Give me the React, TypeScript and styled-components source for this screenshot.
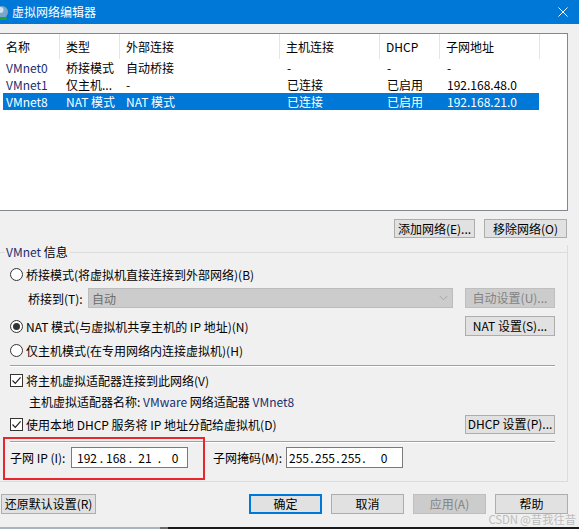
import React from 'react';
import styled, { createGlobalStyle, css } from 'styled-components';

const GlobalStyle = createGlobalStyle`
  body {
    margin: 0;
    font-family: "Noto Sans CJK SC", "Noto Sans", sans-serif;
    font-size: 12px;
    color: #000;
  }
  * { box-sizing: border-box; }
`;

const Window = styled.div`
  position: relative;
  width: 579px;
  height: 529px;
  background: #f0f0f0;
  overflow: hidden;
  display: flex;
  flex-direction: column;
`;

const TitleBar = styled.div`
  height: 24px;
  flex: none;
  background: #0078d7;
  color: #fff;
  display: flex;
  align-items: center;
`;

const Title = styled.span`
  margin-left: 3px;
  line-height: 24px;
  font-size: 12px;
`;

const CloseBox = styled.div`
  margin-left: auto;
  width: 32px;
  height: 24px;
  display: flex;
  align-items: center;
  justify-content: center;
`;

const Body = styled.div`
  flex: 1;
  display: flex;
  flex-direction: column;
  padding: 9px 11px 0 0;
`;

const ListBox = styled.div`
  height: 178px;
  background: #fff;
  border: 1px solid #828790;
  border-left: none;
`;

const HeaderRow = styled.div`
  display: flex;
  height: 25px;
`;

const HeaderCell = styled.div<{ $w: number }>`
  width: ${p => p.$w}px;
  padding-left: 6px;
  border-right: 1px solid #e5e5e5;
  line-height: 25px;
  white-space: nowrap;
`;

const DataRow = styled.div<{ $selected?: boolean }>`
  display: flex;
  height: 17px;
  margin-left: 3px;
  width: 536px;
  ${p => p.$selected && css`
    background: #0078d7;
    color: #fff;
  `}
`;

const DataCell = styled.div<{ $w: number; $pad?: number }>`
  width: ${p => p.$w}px;
  padding-left: ${p => p.$pad ?? 6}px;
  line-height: 17px;
  white-space: nowrap;
  overflow: hidden;
`;

const ButtonRow = styled.div`
  display: flex;
  justify-content: flex-end;
  gap: 9px;
  margin-top: 8px;
  padding-right: 1px;
`;

const Button = styled.div<{ $w: number; $h?: number; $disabled?: boolean; $default?: boolean }>`
  width: ${p => p.$w}px;
  height: ${p => p.$h ?? 19}px;
  flex: none;
  display: flex;
  align-items: center;
  justify-content: center;
  background: #e1e1e1;
  border: 1px solid #adadad;
  white-space: nowrap;
  line-height: 1;
  ${p => p.$disabled && css`
    background: #cccccc;
    border-color: #bfbfbf;
    color: #838383;
  `}
  ${p => p.$default && css`
    border: 2px solid #0078d7;
  `}
`;

const GroupBox = styled.div`
  margin-top: 7px;
  border-right: 1px solid #dcdcdc;
  border-bottom: 1px solid #dcdcdc;
  padding: 0 12px 13px 10px;
  display: flex;
  flex-direction: column;
`;

const GroupHeader = styled.div`
  display: flex;
  align-items: center;
  height: 14px;
  margin-left: -10px;
  margin-right: -12px;
`;

const GroupLine = styled.div<{ $w?: number }>`
  height: 1px;
  background: #dcdcdc;
  ${p => (p.$w ? css`width: ${p.$w}px;` : css`flex: 1;`)}
`;

const GroupLabel = styled.span`
  padding: 0 2px 0 1px;
  line-height: 14px;
`;

const Row = styled.div<{ $h?: number; $mt?: number }>`
  display: flex;
  align-items: center;
  height: ${p => p.$h ?? 20}px;
  margin-top: ${p => p.$mt ?? 0}px;
  white-space: nowrap;
`;

const RadioCircle = styled.span<{ $checked?: boolean }>`
  width: 13px;
  height: 13px;
  border: 1px solid #333;
  border-radius: 50%;
  background: #fff;
  margin-right: 3px;
  flex: none;
  display: flex;
  align-items: center;
  justify-content: center;
  &::after {
    content: '';
    width: 7px;
    height: 7px;
    border-radius: 50%;
    background: ${p => (p.$checked ? '#333' : 'transparent')};
  }
`;

const CheckBox = styled.span`
  width: 13px;
  height: 13px;
  border: 1px solid #333;
  background: #fff;
  margin-right: 3px;
  flex: none;
  display: flex;
  align-items: center;
  justify-content: center;
`;

const FieldLabel = styled.span<{ $w: number; $ml?: number }>`
  width: ${p => p.$w}px;
  margin-left: ${p => p.$ml ?? 0}px;
  flex: none;
`;

const Dropdown = styled.div`
  flex: 1;
  height: 20px;
  background: #cccccc;
  border: 1px solid #bcbcbc;
  color: #6d6d6d;
  display: flex;
  align-items: center;
  padding: 0 4px 0 3px;
  margin-right: 12px;
`;

const Chevron = styled.svg`
  margin-left: auto;
`;

const Separator = styled.div<{ $mt: number }>`
  margin-top: ${p => p.$mt}px;
  height: 2px;
  border-top: 1px solid #a0a0a0;
  border-bottom: 1px solid #fff;
`;

const Indent = styled.span`
  margin-left: 19px;
`;

const Navy = styled.span`
  color: #1b2e6e;
`;

const IpInput = styled.div<{ $pl: number }>`
  width: 117px;
  height: 21px;
  flex: none;
  background: #fff;
  border: 1px solid #7a7a7a;
  display: flex;
  align-items: center;
  padding-left: ${p => p.$pl}px;
`;

const IpField = styled.span<{ $w: number }>`
  width: ${p => p.$w}px;
  flex: none;
  text-align: center;
`;

const IpDot = styled.span<{ $w: number }>`
  width: ${p => p.$w}px;
  flex: none;
  text-align: center;
`;

const Highlight = styled.div`
  position: absolute;
  left: 3px;
  top: 437px;
  width: 202px;
  height: 43px;
  border: 2px solid #e8262d;
  pointer-events: none;
`;

const FooterRow = styled.div`
  display: flex;
  align-items: center;
  gap: 9px;
  margin-top: 12px;
  padding-left: 1px;
`;

const Spacer = styled.div`
  flex: 1;
`;

const BottomStrip = styled.div`
  margin-top: auto;
  height: 2px;
  display: flex;
  margin-right: -11px;
`;

const StripPart = styled.div<{ $w?: number; $c: string }>`
  background: ${p => p.$c};
  ${p => (p.$w ? css`width: ${p.$w}px;` : css`flex: 1;`)}
`;

const Watermark = styled.div`
  position: absolute;
  right: 3px;
  bottom: 4px;
  font-size: 11.5px;
  line-height: 12px;
  color: #bdbdbd;
  letter-spacing: -0.2px;
`;

const columns = [60, 60, 160, 100, 60, 100];

const networks = [
  { name: 'VMnet0', type: '桥接模式', ext: '自动桥接', host: '-', dhcp: '-', subnet: '-' },
  { name: 'VMnet1', type: '仅主机...', ext: '-', host: '已连接', dhcp: '已启用', subnet: '192.168.48.0' },
  { name: 'VMnet8', type: 'NAT 模式', ext: 'NAT 模式', host: '已连接', dhcp: '已启用', subnet: '192.168.21.0', selected: true },
];

const Radio = ({ checked, children }: { checked?: boolean; children: React.ReactNode }) => (
  <>
    <RadioCircle $checked={checked} />
    <span>{children}</span>
  </>
);

const Check = ({ children }: { children: React.ReactNode }) => (
  <>
    <CheckBox>
      <svg width="11" height="11" viewBox="0 0 11 11">
        <path d="M1.5 5.5 L4.3 8.3 L9.6 2.4" fill="none" stroke="#222" strokeWidth="1.2" />
      </svg>
    </CheckBox>
    <span>{children}</span>
  </>
);

// fields: widths of each octet box; dot: width of the dot separator
const IpAddress = ({ parts, pl, fields, dot }: { parts: string[]; pl: number; fields: number[]; dot: number }) => (
  <IpInput $pl={pl}>
    {parts.map((p, i) => (
      <React.Fragment key={i}>
        {i > 0 && <IpDot $w={dot}>.</IpDot>}
        <IpField $w={fields[i]}>{p}</IpField>
      </React.Fragment>
    ))}
  </IpInput>
);

export default function App() {
  return (
    <>
      <GlobalStyle />
      <Window>
        <TitleBar>
          <svg width="9" height="24" viewBox="0 0 9 24">
            <circle cx="2" cy="12" r="6" fill="#7aa6c9" />
            <circle cx="0.5" cy="10" r="3" fill="#cfe2f0" />
            <rect x="0" y="17" width="7" height="3" fill="#1aa33a" />
          </svg>
          <Title>虚拟网络编辑器</Title>
          <CloseBox>
            <svg width="10" height="10" viewBox="0 0 10 10">
              <path d="M0.5 0.5 L9.5 9.5 M9.5 0.5 L0.5 9.5" stroke="#fff" strokeWidth="1" />
            </svg>
          </CloseBox>
        </TitleBar>

        <Body>
          <ListBox>
            <HeaderRow>
              {['名称', '类型', '外部连接', '主机连接', 'DHCP', '子网地址'].map((h, i) => (
                <HeaderCell key={h} $w={columns[i]}>{h}</HeaderCell>
              ))}
            </HeaderRow>
            {networks.map(n => (
              <DataRow key={n.name} $selected={n.selected}>
                <DataCell $w={57} $pad={3}>{n.selected ? n.name : <Navy>{n.name}</Navy>}</DataCell>
                <DataCell $w={60}>{n.type}</DataCell>
                <DataCell $w={160}>{n.ext}</DataCell>
                <DataCell $w={100} $pad={7}>{n.host}</DataCell>
                <DataCell $w={60} $pad={7}>{n.dhcp}</DataCell>
                <DataCell $w={99} $pad={7}>{n.subnet}</DataCell>
              </DataRow>
            ))}
          </ListBox>

          <ButtonRow>
            <Button $w={81}>添加网络(E)...</Button>
            <Button $w={83}>移除网络(O)</Button>
          </ButtonRow>

          <GroupBox>
            <GroupHeader>
              <GroupLine $w={5} />
              <GroupLabel><Navy>VMnet</Navy> 信息</GroupLabel>
              <GroupLine />
            </GroupHeader>

            <Row $mt={5}>
              <Radio>桥接模式(将虚拟机直接连接到外部网络)(B)</Radio>
            </Row>
            <Row $mt={4}>
              <FieldLabel $w={60} $ml={18}>桥接到(T):</FieldLabel>
              <Dropdown>
                自动
                <Chevron width="9" height="6" viewBox="0 0 9 6">
                  <path d="M0.5 0.8 L4.5 4.8 L8.5 0.8" fill="none" stroke="#a6a6a6" strokeWidth="1" />
                </Chevron>
              </Dropdown>
              <Button $w={90} $h={20} $disabled>自动设置(U)...</Button>
            </Row>
            <Row $mt={8}>
              <Radio checked>NAT 模式(与虚拟机共享主机的 IP 地址)(N)</Radio>
              <Spacer />
              <Button $w={90} $h={20}>NAT 设置(S)...</Button>
            </Row>
            <Row $mt={4}>
              <Radio>仅主机模式(在专用网络内连接虚拟机)(H)</Radio>
            </Row>

            <Separator $mt={5} />

            <Row $h={18} $mt={4}>
              <Check>将主机虚拟适配器连接到此网络(V)</Check>
            </Row>
            <Row $h={18} $mt={3}>
              <Indent>
                主机虚拟适配器名称: <Navy>VMware</Navy> 网络适配器 <Navy>VMnet8</Navy>
              </Indent>
            </Row>
            <Row $mt={4}>
              <Check>使用本地 DHCP 服务将 IP 地址分配给虚拟机(D)</Check>
              <Spacer />
              <Button $w={90}>DHCP 设置(P)...</Button>
            </Row>

            <Separator $mt={7} />

            <Row $h={21} $mt={4}>
              <FieldLabel $w={61}>子网 IP (I):</FieldLabel>
              <IpAddress parts={['192', '168', '21', '0']} pl={4} fields={[22, 22, 22, 24]} dot={7} />
              <FieldLabel $w={73} $ml={25}>子网掩码(M):</FieldLabel>
              <IpAddress parts={['255', '255', '255', '0']} pl={2} fields={[20, 20, 20, 34]} dot={6} />
            </Row>
          </GroupBox>

          <FooterRow>
            <Button $w={95} $h={20}>还原默认设置(R)</Button>
            <Spacer />
            <Button $w={73} $h={20} $default>确定</Button>
            <Button $w={73} $h={20}>取消</Button>
            <Button $w={73} $h={20} $disabled>应用(A)</Button>
            <Button $w={73} $h={20}>帮助</Button>
          </FooterRow>

          <BottomStrip>
            <StripPart $w={160} $c="#a9b4bf" />
            <StripPart $w={8} $c="#6b6b6b" />
            <StripPart $c="#1b1b1b" />
          </BottomStrip>
        </Body>

        <Highlight />
        <Watermark>CSDN @昔我往昔</Watermark>
      </Window>
    </>
  );
}
